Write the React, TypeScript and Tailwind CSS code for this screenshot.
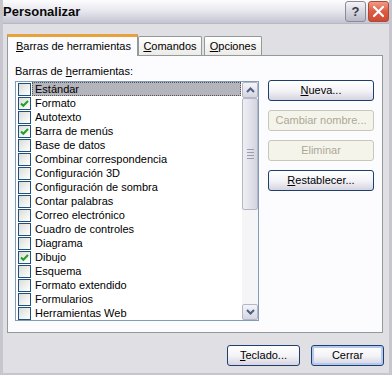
import React from "react";

const items = [
  { label: "Estándar", checked: false },
  { label: "Formato", checked: true },
  { label: "Autotexto", checked: false },
  { label: "Barra de menús", checked: true },
  { label: "Base de datos", checked: false },
  { label: "Combinar correspondencia", checked: false },
  { label: "Configuración 3D", checked: false },
  { label: "Configuración de sombra", checked: false },
  { label: "Contar palabras", checked: false },
  { label: "Correo electrónico", checked: false },
  { label: "Cuadro de controles", checked: false },
  { label: "Diagrama", checked: false },
  { label: "Dibujo", checked: true },
  { label: "Esquema", checked: false },
  { label: "Formato extendido", checked: false },
  { label: "Formularios", checked: false },
  { label: "Herramientas Web", checked: false },
];

const CheckBox = ({ checked }: { checked: boolean }) => (
  <div className="w-[13px] h-[13px] border border-[#1c5180] bg-gradient-to-br from-[#dcdcd7] to-[#ffffff] flex items-center justify-center shrink-0">
    {checked && (
      <svg width="9" height="9" viewBox="0 0 9 9">
        <path d="M1 4.5 L3.3 6.8 L8 2" fill="none" stroke="#21a121" strokeWidth="2" />
      </svg>
    )}
  </div>
);

const Arrow = ({ up }: { up?: boolean }) => (
  <svg width="9" height="6" viewBox="0 0 9 6">
    <path d={up ? "M1 5 L4.5 1.5 L8 5" : "M1 1 L4.5 4.5 L8 1"} fill="none" stroke="#4d6185" strokeWidth="2" />
  </svg>
);

const XpButton = ({ children, disabled, isDefault, w }: { children: React.ReactNode; disabled?: boolean; isDefault?: boolean; w: string }) => (
  <div
    className={
      "h-[21px] rounded-[3px] flex items-center justify-center " +
      w +
      (disabled
        ? " border border-[#c9c7ba] bg-[#f5f4ea] text-[#aca899]"
        : " border border-[#1c3f6e] bg-gradient-to-b from-[#ffffff] via-[#f4f4f8] to-[#d6d4e0] text-black") +
      (isDefault ? " shadow-[inset_0_0_0_2px_#b3c9ef]" : "")
    }
  >
    {children}
  </div>
);

export default function App() {
  return (
    <div className="w-[392px] h-[375px] bg-[#e0dfe3] border-x-[3px] border-b-[2px] border-[#c7c6cf] flex flex-col text-[11px] font-['Liberation_Sans',Arial,sans-serif] text-black overflow-hidden">
      {/* title bar */}
      <div className="h-[24px] -mx-[3px] bg-gradient-to-b from-[#fdfdfe] via-[#e6e6ee] to-[#c4c4d2] flex items-center pl-[3px] pr-[3px] border-b border-[#b8b8c4]">
        <span className="font-bold text-[13px] text-[#0a0a0a] flex-1">Personalizar</span>
        <div className="w-[21px] h-[21px] rounded-[3px] border border-[#8a8a9a] bg-gradient-to-b from-[#f4f4f8] to-[#b9bac6] flex items-center justify-center text-[13px] font-bold text-[#3a3a4a] mr-[2px]">?</div>
        <div className="w-[21px] h-[21px] rounded-[3px] border border-[#a84a3a] bg-gradient-to-b from-[#f09a84] via-[#de5a42] to-[#cf4a32] flex items-center justify-center">
          <svg width="13" height="13" viewBox="0 0 13 13">
            <path d="M2 2 L11 11 M11 2 L2 11" stroke="#fff" strokeWidth="2.2" strokeLinecap="round" />
          </svg>
        </div>
      </div>

      <div className="flex flex-col px-[4px] pt-[9px]">
        {/* tabs */}
        <div className="flex items-end h-[22px]">
          <div className="w-[131px] h-[22px] bg-[#fcfcfe] border-x border-[#919b9c] border-t-[3px] border-t-[#e8a23c] flex items-center pl-[8px] relative z-10 -mb-px">
            <span><span className="underline">B</span>arras de herramientas</span>
          </div>
          <div className="w-[64px] h-[19px] bg-gradient-to-b from-[#ffffff] to-[#ecebe6] border-x border-t border-[#919b9c] rounded-t-[2px] flex items-center justify-center">
            <span><span className="underline">C</span>omandos</span>
          </div>
          <div className="w-[58px] h-[19px] ml-[2px] bg-gradient-to-b from-[#ffffff] to-[#ecebe6] border-x border-t border-[#919b9c] rounded-t-[2px] flex items-center justify-center">
            <span><span className="underline">O</span>pciones</span>
          </div>
        </div>

        {/* panel */}
        <div className="w-[376px] h-[278px] bg-[#fcfcfe] border border-[#919b9c] flex px-[7px] pt-[9px] gap-[9px]">
          <div className="flex flex-col">
            <div className="h-[16px] leading-[13px]">Barras de <span className="underline">h</span>erramientas:</div>
            <div className="w-[244px] h-[240px] border border-[#7f9db9] bg-white flex">
              <div className="flex-1 flex flex-col">
                {items.map((it, i) => (
                  <div key={it.label} className="h-[14px] flex items-center pl-[2px]">
                    <CheckBox checked={it.checked} />
                    <div
                      className={
                        "h-[14px] flex-1 flex items-center pl-[3px] ml-[1px] " +
                        (i === 0 ? "bg-[#b4b4bc] outline-1 outline-dotted outline-[#555] -outline-offset-1" : "")
                      }
                    >
                      {it.label}
                    </div>
                  </div>
                ))}
              </div>
              {/* scrollbar */}
              <div className="w-[16px] bg-[#f5f5f7] flex flex-col ml-[1px]">
                <div className="h-[16px] rounded-[2px] border border-[#b5b7c8] bg-gradient-to-b from-[#f4f4f8] to-[#d6d6e2] flex items-center justify-center">
                  <Arrow up />
                </div>
                <div className="h-[112px] rounded-[2px] border border-[#b5b7c8] bg-gradient-to-r from-[#eeeef4] via-[#e2e2ec] to-[#d4d4e0] flex flex-col items-center justify-center gap-[2px]">
                  <div className="w-[7px] h-px bg-[#9c9cac]" />
                  <div className="w-[7px] h-px bg-[#9c9cac]" />
                  <div className="w-[7px] h-px bg-[#9c9cac]" />
                  <div className="w-[7px] h-px bg-[#9c9cac]" />
                </div>
                <div className="flex-1" />
                <div className="h-[16px] rounded-[2px] border border-[#b5b7c8] bg-gradient-to-b from-[#f4f4f8] to-[#d6d6e2] flex items-center justify-center">
                  <Arrow />
                </div>
              </div>
            </div>
          </div>
          <div className="flex flex-col pt-[15px] gap-[9px]">
            <XpButton w="w-[106px]"><span><span className="underline">N</span>ueva...</span></XpButton>
            <XpButton w="w-[106px]" disabled>Cambiar nombre...</XpButton>
            <XpButton w="w-[106px]" disabled>Eliminar</XpButton>
            <XpButton w="w-[106px]"><span><span className="underline">R</span>establecer...</span></XpButton>
          </div>
        </div>

        {/* bottom buttons */}
        <div className="flex justify-end gap-[11px] pt-[12px] pr-[1px]">
          <XpButton w="w-[73px]"><span><span className="underline">T</span>eclado...</span></XpButton>
          <XpButton w="w-[73px]" isDefault>Cerrar</XpButton>
        </div>
      </div>
    </div>
  );
}
